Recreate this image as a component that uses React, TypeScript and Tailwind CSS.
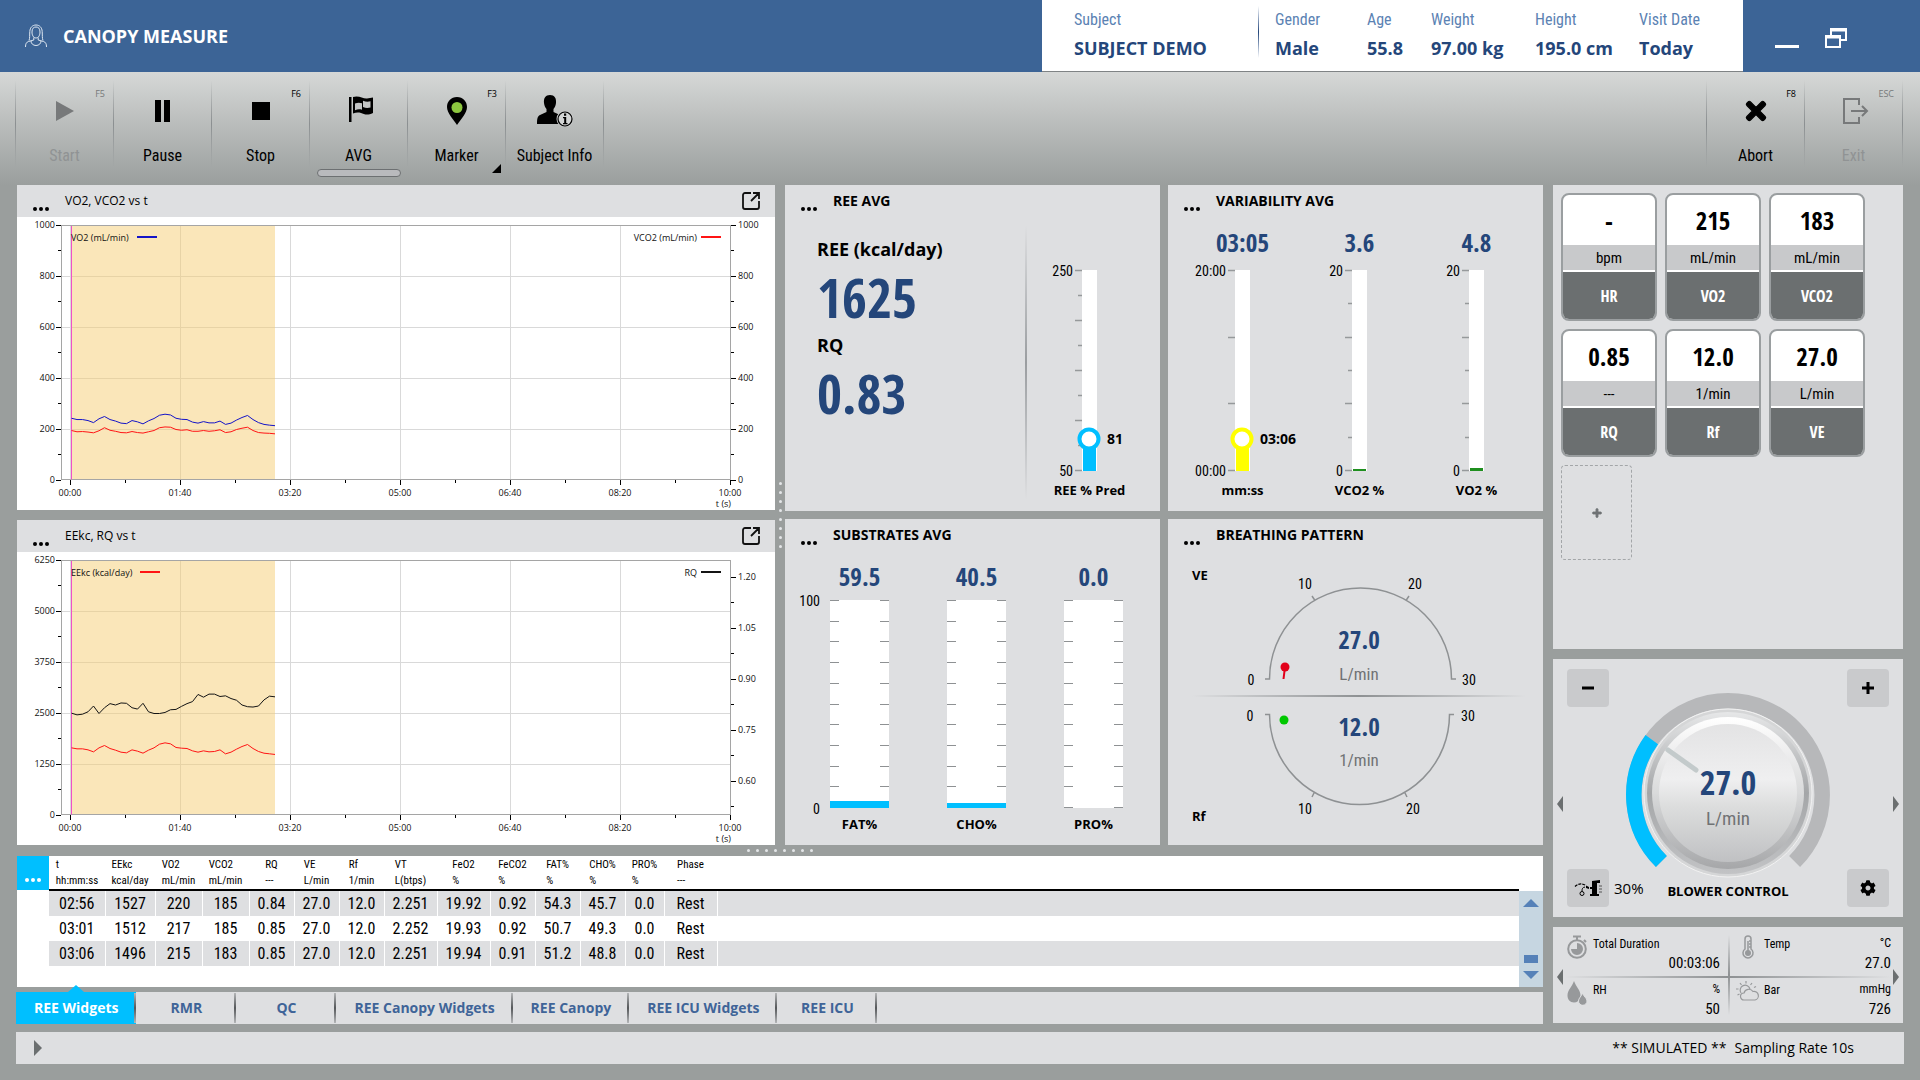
import type { ReactNode } from "react";
import { FaCog, FaPlus, FaTimes } from "react-icons/fa";

const cond =
  "[font-family:'Roboto_Condensed','Liberation_Sans_Narrow','Open_Sans_Condensed_Light','Open_Sans',sans-serif]";
const condBold =
  "[font-family:'Open_Sans_Condensed','Roboto_Condensed','Liberation_Sans_Narrow','Open_Sans',sans-serif] font-bold";

const subject = [
  { label: "Gender", value: "Male", width: "w-[92px]" },
  { label: "Age", value: "55.8", width: "w-16" },
  { label: "Weight", value: "97.00 kg", width: "w-[104px]" },
  { label: "Height", value: "195.0 cm", width: "w-[104px]" },
  { label: "Visit Date", value: "Today", width: "w-[104px]" },
];

const vo2 = [
  244, 239, 239, 235, 227, 242, 251, 239, 233, 225, 223, 235, 230, 222, 234, 243, 256, 260, 257, 244, 240, 239, 229,
  225, 231, 226, 226, 233, 220, 225, 237, 247, 255, 239, 227, 220, 217, 215,
];
const vco2 = [
  196, 191, 192, 190, 187, 195, 207, 197, 193, 188, 187, 192, 188, 186, 191, 196, 207, 210, 209, 200, 197, 199, 193,
  193, 196, 193, 195, 199, 188, 191, 200, 205, 209, 196, 188, 186, 185, 183,
];
const eekc = [
  1658, 1634, 1634, 1609, 1560, 1658, 1716, 1642, 1601, 1552, 1536, 1609, 1577, 1528, 1601, 1658, 1748, 1781, 1757,
  1667, 1650, 1642, 1585, 1552, 1585, 1560, 1569, 1609, 1511, 1552, 1626, 1691, 1740, 1642, 1569, 1527, 1512, 1496,
];
const rq = [
  0.801, 0.796, 0.798, 0.805, 0.822, 0.8, 0.817, 0.829, 0.825, 0.831, 0.83, 0.817, 0.813, 0.83, 0.805, 0.8, 0.8, 0.803,
  0.811, 0.812, 0.821, 0.829, 0.835, 0.856, 0.848, 0.857, 0.857, 0.85, 0.852, 0.844, 0.839, 0.825, 0.82, 0.819, 0.822,
  0.84, 0.851, 0.849,
];

const columns = [
  { name: "t", unit: "hh:mm:ss", width: "w-14" },
  { name: "EEkc", unit: "kcal/day", width: "w-[50px]" },
  { name: "VO2", unit: "mL/min", width: "w-[47px]" },
  { name: "VCO2", unit: "mL/min", width: "w-[47px]" },
  { name: "RQ", unit: "---", width: "w-[45px]" },
  { name: "VE", unit: "L/min", width: "w-[45px]" },
  { name: "Rf", unit: "1/min", width: "w-[45px]" },
  { name: "VT", unit: "L(btps)", width: "w-[53px]" },
  { name: "FeO2", unit: "%", width: "w-[53px]" },
  { name: "FeCO2", unit: "%", width: "w-[45px]" },
  { name: "FAT%", unit: "%", width: "w-[45px]" },
  { name: "CHO%", unit: "%", width: "w-[45px]" },
  { name: "PRO%", unit: "%", width: "w-[39px]" },
  { name: "Phase", unit: "---", width: "w-[53px]" },
];

const rows = [
  ["02:56", "1527", "220", "185", "0.84", "27.0", "12.0", "2.251", "19.92", "0.92", "54.3", "45.7", "0.0", "Rest"],
  ["03:01", "1512", "217", "185", "0.85", "27.0", "12.0", "2.252", "19.93", "0.92", "50.7", "49.3", "0.0", "Rest"],
  ["03:06", "1496", "215", "183", "0.85", "27.0", "12.0", "2.251", "19.94", "0.91", "51.2", "48.8", "0.0", "Rest"],
];

const tabs = ["REE Widgets", "RMR", "QC", "REE Canopy Widgets", "REE Canopy", "REE ICU Widgets", "REE ICU"];

const cards = [
  { value: "-", unit: "bpm", name: "HR" },
  { value: "215", unit: "mL/min", name: "VO2" },
  { value: "183", unit: "mL/min", name: "VCO2" },
  { value: "0.85", unit: "---", name: "RQ" },
  { value: "12.0", unit: "1/min", name: "Rf" },
  { value: "27.0", unit: "L/min", name: "VE" },
];

/* ---------- header ---------- */

function Field({ label, value, width }: { label: string; value: string; width: string }) {
  return (
    <div className={width}>
      <dt className={`${cond} text-base leading-7 text-[#5b82b3] whitespace-nowrap`}>{label}</dt>
      <dd className="text-lg leading-7 font-bold text-[#24467a] whitespace-nowrap">{value}</dd>
    </div>
  );
}

function Header() {
  return (
    <header className="flex h-[72px] bg-[#3c6496] text-white">
      <div className="flex flex-1 items-center gap-[15px] pl-6">
        <svg className="w-6 h-6" viewBox="0 0 24 24" fill="none" stroke="#dfe8f2" strokeWidth="1">
          <path d="M5 16.500C6 14 5.500 11 5.800 7.500 6 3.500 8.500 1 12 1s6 2.500 6.200 6.500c.3 3.500-.2 6.500.8 9" />
          <path d="M8 8c0-3.500 1.500-5 4-5s4 1.500 4 5c0 3-1.300 6-4 6s-4-3-4-6z" />
          <path d="M9.800 13.500v2.500l-5.300 1.500C2.500 18.200 1.500 19.500 1.500 23M14.200 13.500v2.500l5.300 1.500c2 .7 3 2 3 5.500M7 17c0 2.500 2 4.500 5 4.500s5-2 5-4.500" />
        </svg>
        <h1 className="text-lg font-bold">CANOPY MEASURE</h1>
      </div>
      <dl className="flex items-start bg-white border-b border-[#7f8385] pl-8 pt-1.5">
        <Field label="Subject" value="SUBJECT DEMO" width="w-[184px]" />
        <div className="w-px h-13 mr-4 bg-linear-to-b from-white via-[#24467a] to-white" />
        {subject.map((f) => (
          <Field key={f.label} {...f} />
        ))}
      </dl>
      <div className="flex items-center gap-[26px] pl-8 w-[177px]">
        <button aria-label="Minimize" className="w-6 h-6 flex items-end">
          <span className="block w-6 h-[3px] bg-white" />
        </button>
        <button aria-label="Restore" className="pt-1">
          <svg className="w-[22px] h-[22px]" viewBox="0 0 22 22" fill="none" stroke="#fff" strokeWidth="2">
            <path d="M6 8V2h15v11h-5" />
            <path d="M6 3h15" strokeWidth="3" />
            <path d="M1 9h14v11H1z" />
            <path d="M1 10h14" strokeWidth="3" />
          </svg>
        </button>
      </div>
    </header>
  );
}

/* ---------- toolbar ---------- */

type ToolProps = { label: string; hotkey?: string; disabled?: boolean; active?: boolean; menu?: boolean; children: ReactNode };

function Divider() {
  return <div className="w-px h-[88px] bg-linear-to-b from-transparent via-[#8b8f91] to-transparent" />;
}

function Tool({ label, hotkey, disabled, active, menu, children }: ToolProps) {
  return (
    <button
      disabled={disabled}
      className={`relative flex flex-col items-center w-[97px] h-[97px] ${disabled ? "text-[#77797a]" : "text-black"}`}
    >
      <span className="absolute right-2 top-1.5 text-[9px] leading-4">{hotkey}</span>
      <span className="flex items-center justify-center h-14 pt-1.5">{children}</span>
      <span className={`${cond} text-base leading-6 mt-2 whitespace-nowrap ${disabled ? "text-[#909394]" : ""}`}>{label}</span>
      {active && <span className="absolute bottom-0 w-[84px] h-2 rounded-sm border border-[#6d7072] bg-[#b9babd]" />}
      {menu && (
        <svg className="absolute right-1 bottom-1 w-[9px] h-[9px]" viewBox="0 0 9 9">
          <path d="M9 0v9H0z" />
        </svg>
      )}
    </button>
  );
}

function Toolbar() {
  return (
    <nav className="flex justify-between items-start h-[113px] pt-2 pl-[15px] pr-[17px] bg-linear-to-b from-[#d6d8d7] to-[#9a9e9d]">
      <div className="flex">
        <Divider />
        <Tool label="Start" hotkey="F5" disabled>
          <svg className="w-[18px] h-5" viewBox="0 0 18 20" fill="currentColor">
            <path d="M0 0l18 10L0 20z" />
          </svg>
        </Tool>
        <Divider />
        <Tool label="Pause">
          <svg className="w-4 h-[22px]" viewBox="0 0 16 22">
            <path d="M0 0h6v22H0zM9 0h6v22H9z" />
          </svg>
        </Tool>
        <Divider />
        <Tool label="Stop" hotkey="F6">
          <span className="w-[18px] h-[18px] bg-black" />
        </Tool>
        <Divider />
        <Tool label="AVG" active>
          <svg className="w-6 h-[26px] mb-1 ml-1" viewBox="0 0 24 26">
            <path d="M0 1h2.500v25H0zM4 1c6-2 10 2 14 1.500 2-.2 4-.7 6-1V17c-6 3-9 1-12 0-3-.8-5-.5-8 .5z" />
            <path d="M6 7.500c2.500-1 4.500-1 7-.3v6.600c-2.500-.8-4.500-.6-7 .4z" fill="#c3c5c5" />
            <path d="M14 4.800c2.500 1 5 1.200 7.500.5v6.200c-2.500.7-5 .6-7.500-.4z" fill="#c3c5c5" />
          </svg>
        </Tool>
        <Divider />
        <Tool label="Marker" hotkey="F3" menu>
          <svg className="w-5 h-7" viewBox="0 0 20 28">
            <path d="M10 0c6 0 10 4.500 10 10 0 6-6 12-10 18C6 22 0 16 0 10 0 4.500 4 0 10 0z" />
            <circle cx="10" cy="10.500" r="5.500" fill="#8cc63f" />
          </svg>
        </Tool>
        <Divider />
        <Tool label="Subject Info">
          <svg className="w-9 h-8" viewBox="0 0 36 32">
            <path d="M13 0c4.500 0 6.500 3 6 8-.3 3-1.500 5-2.500 6v3l6.500 3c2.500 1.500 3 4 3 9H0c0-5 .5-8 3-9l6.500-3v-3C8.500 13 7.300 11 7 8c-.5-5 1.500-8 6-8z" />
            <circle cx="28" cy="24" r="7.500" fill="#c5c7c7" stroke="#c5c7c7" strokeWidth="2" />
            <circle cx="28" cy="24" r="7" fill="#d3d5d5" stroke="#000" strokeWidth="1.200" />
            <path d="M26 22h3.200v6H30.500v1.200H26V28h1.200v-4.800H26zM27 18.600h2.200v2.200H27z" />
          </svg>
        </Tool>
        <Divider />
      </div>
      <div className="flex">
        <Divider />
        <Tool label="Abort" hotkey="F8">
          <FaTimes className="w-7 h-7" stroke="#000" strokeWidth="20" />
        </Tool>
        <Divider />
        <Tool label="Exit" hotkey="ESC" disabled>
          <svg className="w-[26px] h-[26px] ml-1" viewBox="0 0 26 26" fill="none" stroke="currentColor" strokeWidth="2">
            <path d="M16 7V1H1v24h15v-6M8 13h16M19 8l5 5-5 5" />
          </svg>
        </Tool>
        <Divider />
      </div>
    </nav>
  );
}

/* ---------- trend charts ---------- */

type Series = { label: string; color: string; data: number[]; min: number; max: number };
type ChartProps = { title: string; left: Series; right: Series; leftTicks: string[]; rightTicks: string[]; rightStart: number };

const LEFT = 44.5;
const RIGHT = 713.5;
const TOP = 8.5;
const BOTTOM = 262.5;
const times = ["00:00", "01:40", "03:20", "05:00", "06:40", "08:20", "10:00"];

function toPoints({ data, min, max }: Series) {
  return data.map((v, i) => `${54.5 + i * 5.5},${263.5 - ((v - min) / (max - min)) * 255}`).join(" ");
}

function Dots() {
  return (
    <svg className="w-4 h-1" viewBox="0 0 16 4" fill="currentColor">
      <circle cx="2" cy="2" r="2" />
      <circle cx="8" cy="2" r="2" />
      <circle cx="14" cy="2" r="2" />
    </svg>
  );
}

function Chart({ title, left, right, leftTicks, rightTicks, rightStart }: ChartProps) {
  return (
    <section className="bg-white">
      <header className="flex items-center h-8 pl-4 pr-[15px] bg-[#dedfe1]">
        <button aria-label={`${title} menu`} className="flex items-end h-5">
          <Dots />
        </button>
        <h2 className="pl-4 text-xs">{title}</h2>
        <button aria-label={`Expand ${title}`} className="ml-auto">
          <svg className="w-[18px] h-[18px]" viewBox="0 0 18 18" fill="none" stroke="#111" strokeWidth="1.800">
            <path d="M9 1H3a2 2 0 0 0-2 2v12a2 2 0 0 0 2 2h12a2 2 0 0 0 2-2V9M11 1h6v6M17 1L9 9" />
          </svg>
        </button>
      </header>
      <svg className="block w-full h-auto text-[9px]" viewBox="0 0 758 293" fill="#111">
        {[1, 2, 3, 4].map((i) => (
          <path key={i} d={`M${LEFT} ${TOP + i * 51}H${RIGHT}`} stroke="#d9d9d9" />
        ))}
        {[0, 1, 2, 3, 4, 5].map((i) => (
          <path key={i} d={`M${53.5 + i * 110} ${TOP}V${BOTTOM}`} stroke="#d9d9d9" />
        ))}
        <rect x="54" y="9" width="204" height="254" fill="#f5cd73" fillOpacity="0.5" />
        <rect x={LEFT} y={TOP} width={RIGHT - LEFT} height={BOTTOM - TOP} fill="none" stroke="#a5a5a5" />
        <path d={`M54.500 9V${BOTTOM}`} stroke="#f050c8" />
        {leftTicks.map((t, i) => (
          <g key={t}>
            <path d={`M39 ${TOP + i * 51}h5`} stroke="#000" />
            {i < leftTicks.length - 1 && <path d={`M41 ${TOP + 25 + i * 51}h3`} stroke="#000" />}
            <text x="38" y={TOP + 2 + i * 51} textAnchor="end">{t}</text>
          </g>
        ))}
        {rightTicks.map((t, i) => (
          <g key={t}>
            <path d={`M714 ${rightStart + i * 51}h5`} stroke="#000" />
            {rightStart + 25 + i * 51 < BOTTOM && <path d={`M714 ${rightStart + 25 + i * 51}h3`} stroke="#000" />}
            <text x="721" y={rightStart + 2 + i * 51}>{t}</text>
          </g>
        ))}
        {times.map((t, i) => (
          <g key={t}>
            <path d={`M${53.5 + i * 110} 263v5`} stroke="#000" />
            {i < times.length - 1 && <path d={`M${108.5 + i * 110} 263v3`} stroke="#000" />}
            <text x={53 + i * 110} y="279" textAnchor="middle">{t}</text>
          </g>
        ))}
        <text x="714" y="290" textAnchor="end">t (s)</text>
        <text x="54" y="24">{left.label}</text>
        <path d={left.label.length > 13 ? "M123 20h20" : "M120 20h20"} stroke={left.color} strokeWidth="2" />
        <text x="680" y="24" textAnchor="end">{right.label}</text>
        <path d="M684 20h20" stroke={right.color} strokeWidth="2" />
        <polyline points={toPoints(left)} fill="none" stroke={left.color} />
        <polyline points={toPoints(right)} fill="none" stroke={right.color} />
      </svg>
    </section>
  );
}

/* ---------- widgets ---------- */

function Widget({ title, children }: { title: string; children: ReactNode }) {
  return (
    <section className="bg-[#dedfe1]">
      <header className="flex h-10 pl-4 pt-1.5">
        <button aria-label={`${title} menu`} className="flex items-end h-5">
          <Dots />
        </button>
        <h2 className="pl-4 text-sm leading-5 font-bold">{title}</h2>
      </header>
      {children}
    </section>
  );
}

type GaugeProps = {
  value?: string;
  label: string;
  top: string;
  bottom: string;
  ticks: number;
  minor?: boolean;
  color: string;
  fill: number;
  knob?: string;
};

function Gauge({ value, label, top, bottom, ticks, minor, color, fill, knob }: GaugeProps) {
  return (
    <div className="flex flex-col items-center">
      <div className={`${condBold} h-9 text-[25px] leading-[34px] text-[#24467a]`}>{value}</div>
      <svg className="mt-1 w-[117px] h-[211px] overflow-visible" viewBox="0 0 117 211">
        <rect x="51" y="5" width="15" height="201" fill="#fff" />
        {Array.from({ length: ticks }, (_, i) => (
          <path
            key={i}
            d={`M${minor && i % 2 ? 47 : 44} ${5.5 + Math.round((i * 200) / (ticks - 1))}H51`}
            stroke="#96999b"
            strokeWidth="1.500"
          />
        ))}
        <rect x="52" y={206 - fill} width="13" height={fill} fill={color} />
        {knob && <circle cx="58" cy="174" r="9.500" fill="#fff" stroke={color} strokeWidth="4" />}
        {knob && <text x="76" y="179" className="text-sm font-bold">{knob}</text>}
        <text x="42" y="11" textAnchor="end" className={`${cond} text-sm`}>{top}</text>
        <text x="42" y="211" textAnchor="end" className={`${cond} text-sm`}>{bottom}</text>
      </svg>
      <div className="mt-1 text-[13px] leading-5 font-bold whitespace-nowrap">{label}</div>
    </div>
  );
}

function SubstrateBar({ value, label, fill, scale }: { value: string; label: string; fill: number; scale?: boolean }) {
  return (
    <div className="flex flex-col items-center">
      <div className={`${condBold} h-9 text-[25px] leading-[34px] text-[#24467a]`}>{value}</div>
      <svg className="mt-1 w-[117px] h-[211px] overflow-visible" viewBox="0 0 117 211">
        <rect x="29" y="1" width="59" height="208" fill="#fff" />
        {Array.from({ length: 11 }, (_, i) => (
          <path key={i} d={`M29 ${1.5 + Math.round(i * 20.7)}h9m41 0h9`} stroke="#8e9193" />
        ))}
        <rect x="29" y={209 - fill} width="59" height={fill} fill="#00bfff" />
        {scale && (
          <g className={`${cond} text-sm`} textAnchor="end">
            <text x="19" y="7">100</text>
            <text x="19" y="215">0</text>
          </g>
        )}
      </svg>
      <div className="mt-1 text-[13px] leading-5 font-bold">{label}</div>
    </div>
  );
}

function BreathingDial() {
  return (
    <svg className="block w-full h-auto" viewBox="0 0 375 286">
      <defs>
        <linearGradient id="breath-line">
          <stop offset="0" stopColor="#8e9193" stopOpacity="0" />
          <stop offset="0.500" stopColor="#8e9193" />
          <stop offset="1" stopColor="#8e9193" stopOpacity="0" />
        </linearGradient>
      </defs>
      <g fill="none" stroke="#8e9193" strokeWidth="1.500">
        <path d="M97 120h4.500a91 91 0 0 1 182 0h4.500M144 37l3 4.500M241 37l-3 4.500" />
        <path d="M97 155.500h4.500a90 90 0 0 0 180 0h4.500M144 238l2.500-5M239 238l-2.500-5" />
      </g>
      <rect x="24" y="136" width="334" height="2" fill="url(#breath-line)" />
      <g className="text-[13px] font-bold">
        <text x="24" y="21">VE</text>
        <text x="24" y="262">Rf</text>
      </g>
      <g className={`${cond} text-sm`} textAnchor="middle">
        <text x="137" y="30">10</text>
        <text x="247" y="30">20</text>
        <text x="83" y="126">0</text>
        <text x="301" y="126">30</text>
        <text x="82" y="162">0</text>
        <text x="300" y="162">30</text>
        <text x="137" y="255">10</text>
        <text x="245" y="255">20</text>
      </g>
      <g className={`${condBold} text-[25px]`} textAnchor="middle" fill="#24467a">
        <text x="191" y="90">27.0</text>
        <text x="191" y="177">12.0</text>
      </g>
      <g className={`${cond} text-[17px]`} textAnchor="middle" fill="#707274">
        <text x="191" y="121">L/min</text>
        <text x="191" y="207">1/min</text>
      </g>
      <path d="M117 108l-1.500 12" stroke="#e2001a" strokeWidth="2" />
      <circle cx="117" cy="108" r="4.500" fill="#e2001a" />
      <circle cx="116" cy="161" r="4.500" fill="#00c800" />
    </svg>
  );
}

function Widgets() {
  return (
    <div className="flex-1 grid grid-cols-2 grid-rows-2 gap-2">
      <Widget title="REE AVG">
        <div className="flex pr-3">
          <dl className="flex-1 pl-8 pt-1.5">
            <dt className="text-lg leading-9 font-bold">REE (kcal/day)</dt>
            <dd className={`${condBold} text-[54px] leading-[60px] text-[#24467a]`}>1625</dd>
            <dt className="text-lg leading-9 font-bold">RQ</dt>
            <dd className={`${condBold} text-[54px] leading-[60px] text-[#24467a]`}>0.83</dd>
          </dl>
          <div className="w-0.5 mr-1 bg-linear-to-b from-transparent via-[#9a9da0] to-transparent" />
          <Gauge label="REE % Pred" top="250" bottom="50" ticks={9} minor color="#00bfff" fill={30} knob="81" />
        </div>
      </Widget>
      <Widget title="VARIABILITY AVG">
        <div className="grid grid-cols-3 pl-4 pr-2">
          <Gauge value="03:05" label="mm:ss" top="20:00" bottom="00:00" ticks={4} color="#ffff00" fill={30} knob="03:06" />
          <Gauge value="3.6" label="VCO2 %" top="20" bottom="0" ticks={7} minor color="#1f8f1f" fill={2} />
          <Gauge value="4.8" label="VO2 %" top="20" bottom="0" ticks={7} minor color="#1f8f1f" fill={3} />
        </div>
      </Widget>
      <Widget title="SUBSTRATES AVG">
        <div className="grid grid-cols-3 pl-4 pr-2">
          <SubstrateBar value="59.5" label="FAT%" fill={7} scale />
          <SubstrateBar value="40.5" label="CHO%" fill={5} />
          <SubstrateBar value="0.0" label="PRO%" fill={0} />
        </div>
      </Widget>
      <Widget title="BREATHING PATTERN">
        <BreathingDial />
      </Widget>
    </div>
  );
}

/* ---------- data table and tabs ---------- */

function Grip({ vertical }: { vertical?: boolean }) {
  return (
    <div className={`flex items-center justify-center gap-[6px] ${vertical ? "flex-col w-[10px]" : "h-[11px]"}`}>
      {Array.from({ length: 8 }, (_, i) => (
        <span key={i} className="w-[3px] h-[3px] rounded-full bg-[#e4e6e8]" />
      ))}
    </div>
  );
}

function DataTable() {
  return (
    <div className="flex h-[131px] bg-white">
      <button aria-label="Table menu" className="flex items-end justify-center w-8 h-[34px] pb-2 bg-[#00bfff] text-white">
        <Dots />
      </button>
      <table className="flex-1 self-start table-fixed border-collapse">
        <thead>
          <tr className="h-[34px] border-b-2 border-black">
            {columns.map((c) => (
              <th key={c.name} className={`${c.width} p-0 font-normal`}>
                <span className={`${cond} block w-fit mx-auto text-left text-[11px] leading-4 whitespace-nowrap`}>
                  {c.name}
                  <br />
                  {c.unit}
                </span>
              </th>
            ))}
            <th />
          </tr>
        </thead>
        <tbody>
          {rows.map((r) => (
            <tr key={r[0]} className="h-[25px] odd:bg-[#dedfe1]">
              {r.map((c, i) => (
                <td key={i} className={`${cond} pt-px pb-0 px-0 border-r border-white text-center text-base leading-6`}>
                  {c}
                </td>
              ))}
              <td />
            </tr>
          ))}
        </tbody>
      </table>
      <div className="flex flex-col items-center w-6 mt-[35px] py-2 bg-[#c6d6e1]">
        <svg className="w-4 h-2" viewBox="0 0 16 8" fill="#5581b8">
          <path d="M0 8l8-8 8 8z" />
        </svg>
        <span className="mt-auto w-3.5 h-2 bg-[#5581b8]" />
        <svg className="mt-2 w-4 h-2" viewBox="0 0 16 8" fill="#5581b8">
          <path d="M0 0l8 8 8-8z" />
        </svg>
      </div>
    </div>
  );
}

function Tabs() {
  return (
    <div role="tablist" className="flex h-8 mt-[5px] -ml-px bg-[#dedfe1]">
      {tabs.map((t, i) => (
        <button
          key={t}
          role="tab"
          aria-selected={i === 0}
          className={`relative min-w-[100px] px-[18px] text-sm font-bold whitespace-nowrap ${
            i === 0 ? "bg-[#00bfff] text-white" : "text-[#3f6498]"
          }`}
        >
          {t}
          {i === 0 && (
            <svg className="absolute left-1/2 -top-[7px] -ml-2 w-4 h-[7px]" viewBox="0 0 16 7" fill="#00bfff">
              <path d="M0 7l8-7 8 7z" />
            </svg>
          )}
          <span className="absolute right-0 top-px bottom-px w-0.5 bg-linear-to-b from-[#b4b6b8] via-[#55585a] to-[#b4b6b8]" />
        </button>
      ))}
    </div>
  );
}

/* ---------- right column ---------- */

function Cards() {
  return (
    <section className="flex flex-wrap content-start gap-2 h-[464px] p-2 bg-[#dedfe1]">
      {cards.map((c) => (
        <div key={c.name} className="flex flex-col w-24 h-32 rounded-lg border-2 border-[#9a9ea0] bg-white overflow-hidden text-center">
          <div className={`${condBold} h-[52px] text-[25px] leading-[50px]`}>{c.value}</div>
          <div className={`${cond} h-[25px] text-[15px] leading-[26px] bg-[#c8c9cb]`}>{c.unit}</div>
          <div className={`${condBold} flex-1 mt-0.5 pt-px text-base leading-[46px] text-white bg-[#6b6f70]`}>{c.name}</div>
        </div>
      ))}
      <button aria-label="Add parameter" className="flex items-center justify-center w-[71px] h-[95px] rounded border border-dashed border-[#a3a6a8] text-[#707375]">
        <FaPlus className="w-2.5 h-2.5" stroke="currentColor" strokeWidth="50" />
      </button>
    </section>
  );
}

function PanelArrows({ top }: { top: string }) {
  return (
    <>
      <button aria-label="Previous" className={`absolute left-1 ${top}`}>
        <svg className="w-1.5 h-4" viewBox="0 0 6 16" fill="#6b6f70">
          <path d="M6 0v16L0 8z" />
        </svg>
      </button>
      <button aria-label="Next" className={`absolute right-1 ${top}`}>
        <svg className="w-1.5 h-4" viewBox="0 0 6 16" fill="#6b6f70">
          <path d="M0 0v16l6-8z" />
        </svg>
      </button>
    </>
  );
}

function SquareButton({ label, children }: { label: string; children: ReactNode }) {
  return (
    <button aria-label={label} className="flex items-center justify-center shrink-0 w-[42px] h-[38px] rounded-sm bg-[#c9cacc]">
      {children}
    </button>
  );
}

function Dial() {
  return (
    <svg className="shrink-0 w-[204px] h-[184px] overflow-visible" viewBox="0 0 204 184">
      <defs>
        <linearGradient id="ring" x2="0" y2="1">
          <stop offset="0" stopColor="#e6e7e8" />
          <stop offset="0.500" stopColor="#a4a6a8" />
          <stop offset="1" stopColor="#c2c3c5" />
        </linearGradient>
        <linearGradient id="rim" x2="0" y2="1">
          <stop offset="0" stopColor="#ffffff" />
          <stop offset="0.500" stopColor="#d9dadb" />
          <stop offset="1" stopColor="#a6a7a9" />
        </linearGradient>
        <linearGradient id="face" x2="0" y2="1">
          <stop offset="0" stopColor="#e3e3e4" />
          <stop offset="0.400" stopColor="#efeff0" />
          <stop offset="0.600" stopColor="#dcdddd" />
          <stop offset="1" stopColor="#c0c1c3" />
        </linearGradient>
      </defs>
      <path d="M35.400 168.600A94.200 94.200 0 1 1 168.600 168.600" fill="none" stroke="#b7b8ba" strokeWidth="15.500" />
      <path d="M35.400 168.600A94.200 94.200 0 0 1 25.800 46.600" fill="none" stroke="#00bfff" strokeWidth="15.500" />
      <circle cx="102" cy="100" r="84" fill="#d5d6d7" stroke="#f2f2f2" />
      <circle cx="102" cy="100" r="81" fill="url(#ring)" />
      <circle cx="102" cy="100" r="76" fill="url(#rim)" />
      <circle cx="102" cy="100" r="69" fill="url(#face)" />
      <path d="M42 57l28 20" stroke="#c3cacb" strokeWidth="5" strokeLinecap="round" />
      <text x="102" y="102" textAnchor="middle" className={`${condBold} text-[34px]`} fill="#24467a">27.0</text>
      <text x="102" y="132" textAnchor="middle" className={`${cond} text-[19px]`} fill="#707274">L/min</text>
    </svg>
  );
}

function Blower() {
  return (
    <section className="relative flex justify-between h-[258px] px-3.5 py-2.5 bg-[#dedfe1]">
      <PanelArrows top="top-[137px]" />
      <div className="flex flex-col justify-between w-[42px]">
        <SquareButton label="Decrease flow">
          <svg className="w-3 h-3" viewBox="0 0 12 12" stroke="#000" strokeWidth="3">
            <path d="M0 6h12" />
          </svg>
        </SquareButton>
        <div className="flex items-center gap-[5px]">
          <SquareButton label="Blower">
            <svg className="w-7 h-4" viewBox="0 0 28 16">
              <path d="M1 6.500C4 3.500 8 3 12 5.500" fill="none" stroke="#000" strokeWidth="1.300" strokeDasharray="3 1" />
              <circle cx="8" cy="13.500" r="2" fill="none" stroke="#000" />
              <path d="M8 11.500c0-3 .5-4 3-4.500" stroke="#000" fill="none" />
              <path d="M12 5.500l3 1.500v2l-3-1zM18 1l8-1v3h-3v11h2v2h-9v-2h2V9h-2V7h2z" />
              <path d="M25 6h3M25 9h3M25 12h3" stroke="#555" />
            </svg>
          </SquareButton>
          <span className="text-[15px]">30%</span>
        </div>
      </div>
      <div className="flex flex-col items-center pt-6 w-[204px]">
        <Dial />
        <h2 className="text-[13px] leading-7 font-bold whitespace-nowrap">BLOWER CONTROL</h2>
      </div>
      <div className="flex flex-col justify-between">
        <SquareButton label="Increase flow">
          <svg className="w-3 h-3" viewBox="0 0 12 12" stroke="#000" strokeWidth="3">
            <path d="M0 6h12M6 0v12" />
          </svg>
        </SquareButton>
        <SquareButton label="Blower settings">
          <FaCog className="w-4 h-4" />
        </SquareButton>
      </div>
    </section>
  );
}

function Reading({ label, unit, value, children }: { label: string; unit?: string; value: string; children: ReactNode }) {
  return (
    <div className={`${cond} flex h-[46px] pt-2 gap-1`}>
      <div className="flex justify-center w-6">{children}</div>
      <div className="flex-1">
        <div className="flex justify-between text-xs leading-[18px] whitespace-nowrap">
          <span>{label}</span>
          <span className="leading-4">{unit}</span>
        </div>
        <div className="text-[15px] leading-5 text-right">{value}</div>
      </div>
    </div>
  );
}

function Ambient() {
  return (
    <section className="relative h-24 px-3 bg-[#dedfe1]">
      <PanelArrows top="top-[42px]" />
      <div className="absolute left-1/2 inset-y-2 w-0.5 bg-linear-to-b from-transparent via-[#8e9193] to-transparent" />
      <div className="absolute top-[49px] inset-x-3 h-0.5 bg-linear-to-r from-transparent via-[#8e9193] to-transparent" />
      <div className="grid grid-cols-2 gap-x-4">
        <Reading label="Total Duration" value="00:03:06">
          <svg className="w-5 h-6" viewBox="0 0 20 24" fill="none" stroke="#97999b" strokeWidth="2">
            <circle cx="10" cy="14" r="8.800" />
            <path d="M6 1.500h8M10 2v3M17 5l2 2" />
            <path d="M10 8a6 6 0 1 1-6 6h6z" fill="#97999b" stroke="none" />
          </svg>
        </Reading>
        <Reading label="Temp" unit="°C" value="27.0">
          <svg className="w-3 h-6" viewBox="0 0 12 24" fill="none" stroke="#97999b" strokeWidth="1.500">
            <path d="M3 14V4a3 3 0 0 1 6 0v10a5 5 0 1 1-6 0z" />
            <circle cx="6" cy="18" r="3" fill="#97999b" stroke="none" />
            <path d="M6 16V6M7 6h2M7 9h2M7 12h2" />
          </svg>
        </Reading>
        <Reading label="RH" unit="%" value="50">
          <svg className="w-5 h-6" viewBox="0 0 20 24" fill="#97999b">
            <path d="M7 0c2 6 6.500 9 6.500 14.500 0 1-.2 2-.5 2.500-1 2.500-3 4.500-6 4.500-4 0-6.500-3-6.500-7C.5 9 5 6 7 0z" />
            <path d="M15.500 12c1 3.500 4.500 5 4.500 8a4 4 0 0 1-8.500 0c0-3 3-4.500 4-8z" stroke="#dedfe1" />
          </svg>
        </Reading>
        <Reading label="Bar" unit="mmHg" value="726">
          <svg className="w-6 h-5" viewBox="0 0 24 20" fill="none" stroke="#97999b" strokeWidth="1.200">
            <path d="M5 12a5 5 0 1 1 9-4" />
            <path d="M10 0v2.500M4 2l1.500 2M16 2l-1.500 2M0 8h2.500M1.500 14l2-1M18 6.500l2-1" />
            <path d="M8 19a3.500 3.500 0 0 1 0-7 5 5 0 0 1 9-1.500 4.300 4.300 0 1 1 2 8.500z" />
          </svg>
        </Reading>
      </div>
    </section>
  );
}

export default function App() {
  return (
    <div className="flex flex-col min-h-screen bg-[#9a9e9d] text-black [font-family:'Open_Sans','Noto_Sans',sans-serif]">
      <Header />
      <Toolbar />
      <div className="flex gap-[10px] pl-[17px] pr-[17px]">
        <main className="flex-1 min-w-0">
          <div className="flex">
            <div className="flex-1 flex flex-col gap-[10px]">
              <Chart
                title="VO2, VCO2 vs t"
                left={{ label: "VO2 (mL/min)", color: "#1414c8", data: vo2, min: 0, max: 1000 }}
                right={{ label: "VCO2 (mL/min)", color: "#ff1414", data: vco2, min: 0, max: 1000 }}
                leftTicks={["1000", "800", "600", "400", "200", "0"]}
                rightTicks={["1000", "800", "600", "400", "200", "0"]}
                rightStart={8.5}
              />
              <Chart
                title="EEkc, RQ vs t"
                left={{ label: "EEkc (kcal/day)", color: "#ff1414", data: eekc, min: 0, max: 6250 }}
                right={{ label: "RQ", color: "#141414", data: rq, min: 0.5, max: 1.25 }}
                leftTicks={["6250", "5000", "3750", "2500", "1250", "0"]}
                rightTicks={["1.20", "1.05", "0.90", "0.75", "0.60"]}
                rightStart={25.5}
              />
            </div>
            <Grip vertical />
            <Widgets />
          </div>
          <Grip />
          <DataTable />
          <Tabs />
        </main>
        <aside className="flex flex-col gap-[10px] w-[350px]">
          <Cards />
          <Blower />
          <Ambient />
        </aside>
      </div>
      <footer className="flex items-center justify-between h-8 mt-2 mx-4 pl-[18px] pr-[50px] bg-[#dedfe1]">
        <button aria-label="Show messages">
          <svg className="w-2 h-4" viewBox="0 0 8 16" fill="#6b6f70">
            <path d="M0 0l8 8-8 8z" />
          </svg>
        </button>
        <div className="flex gap-2 text-sm">
          <span>** SIMULATED **</span>
          <span>Sampling Rate 10s</span>
        </div>
      </footer>
    </div>
  );
}
